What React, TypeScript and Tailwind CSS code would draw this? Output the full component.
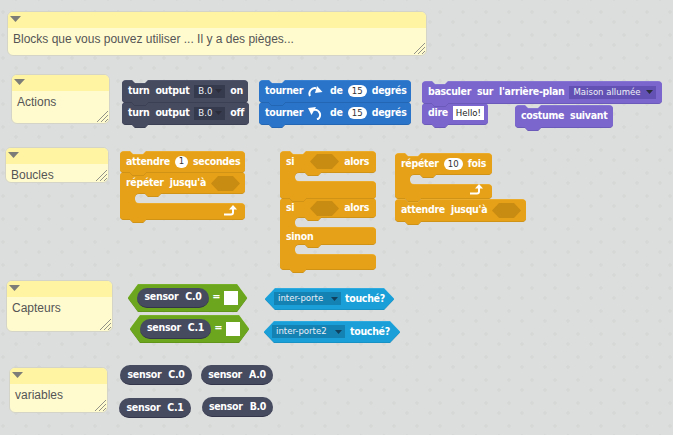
import type { ReactNode } from 'react'

const R = 4

// scratch stack block outline, mouths are [top, bottom] pairs for C blocks
function stackPath(w: number, h: number, mouths: [number, number][] = [], inner = 15) {
  let d = `M0 ${R} Q0 0 ${R} 0 L10 0 L13 3 L23 3 L26 0 L${w - R} 0 Q${w} 0 ${w} ${R} `
  for (const [a, b] of mouths) {
    d += `L${w} ${a - R} Q${w} ${a} ${w - R} ${a} L${inner + 26} ${a} L${inner + 23} ${a + 3} L${inner + 13} ${a + 3} L${inner + 10} ${a} L${inner + R} ${a} `
    d += `Q${inner} ${a} ${inner} ${a + R} L${inner} ${b - R} Q${inner} ${b} ${inner + R} ${b} L${w - R} ${b} Q${w} ${b} ${w} ${b + R} `
  }
  d += `L${w} ${h - R} Q${w} ${h} ${w - R} ${h} L26 ${h} L23 ${h + 3} L13 ${h + 3} L10 ${h} L${R} ${h} Q0 ${h} 0 ${h - R} Z`
  return d
}

function hexPath(w: number, h: number, p: number) {
  return `M0 ${h / 2} L${p} 0 L${w - p} 0 L${w} ${h / 2} L${w - p} ${h} L${p} ${h} Z`
}

type Tone = { main: string; light: string; dark: string }

const DARK = { main: '#474b60', light: '#5b5f76', dark: '#33364a' }
const BLUE = { main: '#2a74c9', light: '#4b8ed8', dark: '#1d5a9e' }
const PURPLE = { main: '#7a66cc', light: '#9484dc', dark: '#5f4eaa' }
const ORANGE = { main: '#e6a118', light: '#f0b63f', dark: '#bd8412' }
const GREEN = { main: '#6ca61f', light: '#83bc36', dark: '#558417' }
const CYAN = { main: '#1a9fd8', light: '#44b6e6', dark: '#1480ae' }

function Shape({ d, w, h, tone }: { d: string; w: number; h: number; tone: Tone }) {
  return (
    <svg width={w} height={h + 5} className="absolute left-0 top-0 overflow-visible">
      <path d={d} fill={tone.dark} transform="translate(0 1)" />
      <path d={d} fill={tone.light} />
      <path d={d} fill={tone.main} transform="translate(0 0.6)" />
    </svg>
  )
}

function Stack({ pos, w, h, tone, mouths, children }: { pos: string; w: number; h: number; tone: Tone; mouths?: [number, number][]; children: ReactNode }) {
  return (
    <div className={`absolute ${pos}`}>
      <Shape d={stackPath(w, h, mouths)} w={w} h={h} tone={tone} />
      <div className="relative flex flex-col">{children}</div>
    </div>
  )
}

function Row({ children, className = 'h-[22px]' }: { children?: ReactNode; className?: string }) {
  return (
    <div className={`flex items-center gap-[5px] whitespace-nowrap pl-[6px] text-[10.5px] font-bold tracking-[-0.3px] text-white [word-spacing:3px] ${className}`}>
      {children}
    </div>
  )
}

function Caret({ color = '#2b2d3a' }: { color?: string }) {
  return (
    <svg width="7" height="4" className="shrink-0">
      <path d="M0 0 L7 0 L3.5 4 Z" fill={color} />
    </svg>
  )
}

function Drop({ label, className, bg, caret }: { label: string; className: string; bg: string; caret?: string }) {
  return (
    <span className={`flex h-[13px] items-center justify-between pl-[4px] pr-[3px] text-[9.5px] font-normal tracking-normal text-[#eef0f6] [word-spacing:0] ${bg} ${className}`}>
      {label}
      <Caret color={caret} />
    </span>
  )
}

function Num({ value, className = 'w-[19px]' }: { value: string; className?: string }) {
  return (
    <span className={`flex h-[12px] items-center justify-center rounded-full bg-white text-[9.5px] font-normal tracking-normal text-[#333] ${className}`}>
      {value}
    </span>
  )
}

function Slot({ w, fill = '#c98c12' }: { w: number; fill?: string }) {
  return (
    <svg width={w} height="15" className="shrink-0">
      <path d={hexPath(w, 15, 7)} fill={fill} />
    </svg>
  )
}

function TurnRight() {
  return (
    <svg width="15" height="13" viewBox="0 0 15 13" className="shrink-0" fill="none">
      <path d="M2 11 A5.5 5.5 0 0 1 8 3.2" stroke="white" strokeWidth="2" />
      <path d="M9 1 L14.5 7 L7 8 Z" fill="white" />
    </svg>
  )
}

function TurnLeft() {
  return (
    <svg width="15" height="13" viewBox="0 0 15 13" className="shrink-0" fill="none">
      <path d="M6 3 A5 5 0 0 1 9 12.5" stroke="white" strokeWidth="2" />
      <path d="M0 1 L8 0 L3.5 8 Z" fill="white" />
    </svg>
  )
}

function LoopArrow() {
  return (
    <svg width="14" height="11" className="absolute bottom-[3px] right-[2px]" fill="none">
      <path d="M0 9.5 L7 9.5 Q9 9.5 9 7.5 L9 4" stroke="white" strokeWidth="2" />
      <path d="M5 4.5 L9 0 L13 4.5 Z" fill="white" />
    </svg>
  )
}

function Hex({ pos, w, h, tone, children }: { pos: string; w: number; h: number; tone: Tone; children: ReactNode }) {
  return (
    <div className={`absolute ${pos}`}>
      <Shape d={hexPath(w, h, 10)} w={w} h={h} tone={tone} />
      <div className="relative flex h-full items-center">{children}</div>
    </div>
  )
}

function Pill({ label, className = '' }: { label: string; className?: string }) {
  return (
    <span className={`flex h-[20px] items-center justify-center rounded-full border-b border-[#33364a] bg-[#474b60] text-[10.5px] font-bold tracking-[-0.3px] text-white [word-spacing:4px] ${className}`}>
      {label}
    </span>
  )
}

function Note({ pos, text }: { pos: string; text: string }) {
  return (
    <div className={`absolute flex flex-col overflow-hidden rounded-[6px] border border-[#d4d4c8] bg-[#fffbcf] ${pos}`}>
      <div className="h-[16px] shrink-0 bg-[#fff4a1] pl-[2px] pt-[4px]">
        <svg width="11" height="6" className="block">
          <path d="M0 0 L11 0 L5.5 6 Z" fill="#7c7c78" />
        </svg>
      </div>
      <p className="pl-[5px] pt-[4px] text-[12px] leading-[14px] text-[#555]">{text}</p>
      <svg width="11" height="11" className="absolute bottom-[1px] right-[1px]" stroke="#777" strokeWidth="0.8">
        <path d="M0 11 L11 0 M4 11 L11 4 M8 11 L11 8" />
      </svg>
    </div>
  )
}

export default function App() {
  return (
    <div className="relative h-[435px] w-[673px] overflow-hidden bg-[#dcdedd] font-['DejaVu_Sans_Condensed','DejaVu_Sans',sans-serif]">
      <svg width="673" height="435" className="absolute left-0 top-0">
        <defs>
          <pattern id="grid" width="23" height="23" x="0" y="10" patternUnits="userSpaceOnUse">
            <path d="M1 2 H5 M3 0 V4 M14 12 H18 M16 10 V14" stroke="#d3d5d4" strokeWidth="1" />
          </pattern>
        </defs>
        <rect width="673" height="435" fill="url(#grid)" />
      </svg>

      <div className="font-['Liberation_Sans',sans-serif]">
        <Note pos="left-[7px] top-[11px] h-[45px] w-[420px]" text="Blocks que vous pouvez utiliser ... Il y a des pièges..." />
        <Note pos="left-[11px] top-[74px] h-[50px] w-[99px]" text="Actions" />
        <Note pos="left-[5px] top-[147px] h-[36px] w-[104px]" text="Boucles" />
        <Note pos="left-[6px] top-[280px] h-[52px] w-[107px]" text="Capteurs" />
        <Note pos="left-[9px] top-[367px] h-[46px] w-[99px]" text="variables" />
      </div>

      <Stack pos="left-[122px] top-[102px]" w={127} h={22} tone={DARK}>
        <Row>turn output <Drop label="B.0" className="w-[31px]" bg="bg-[#363a4d]" /> off</Row>
      </Stack>
      <Stack pos="left-[122px] top-[80px]" w={126} h={22} tone={DARK}>
        <Row>turn output <Drop label="B.0" className="w-[31px]" bg="bg-[#363a4d]" /> on</Row>
      </Stack>

      <Stack pos="left-[259px] top-[102px]" w={152} h={22} tone={BLUE}>
        <Row>tourner <TurnLeft /> <span className="ml-[2px]">de</span> <Num value="15" /> degrés</Row>
      </Stack>
      <Stack pos="left-[259px] top-[80px]" w={152} h={22} tone={BLUE}>
        <Row>tourner <TurnRight /> <span className="ml-[2px]">de</span> <Num value="15" /> degrés</Row>
      </Stack>

      <Stack pos="left-[422px] top-[103px]" w={66} h={21} tone={PURPLE}>
        <Row className="h-[20px]">
          dire
          <span className="flex h-[14px] w-[31px] items-center justify-center bg-white text-[9.5px] font-normal tracking-normal text-[#222]">Hello!</span>
        </Row>
      </Stack>
      <Stack pos="left-[422px] top-[81px]" w={240} h={22} tone={PURPLE}>
        <Row>
          basculer sur l'arrière-plan
          <Drop label="Maison allumée" className="w-[87px]" bg="bg-[#6352b4]" />
        </Row>
      </Stack>
      <Stack pos="left-[515px] top-[105px]" w={98} h={22} tone={PURPLE}>
        <Row>costume suivant</Row>
      </Stack>

      <Stack pos="left-[120px] top-[172px]" w={125} h={47} tone={ORANGE} mouths={[[21, 31]]}>
        <div className="relative h-[47px]">
          <Row>répéter jusqu'à <Slot w={29} /></Row>
          <LoopArrow />
        </div>
      </Stack>
      <Stack pos="left-[120px] top-[151px]" w={125} h={21} tone={ORANGE}>
        <Row className="h-[21px]">attendre <Num value="1" className="w-[13px]" /> secondes</Row>
      </Stack>

      <Stack pos="left-[280px] top-[198px]" w={96} h={71} tone={ORANGE} mouths={[[19, 29], [46, 56]]}>
        <Row className="h-[20px]"><span>si</span><span className="ml-[11px]"><Slot w={29} /></span><span>alors</span></Row>
        <Row className="mt-[10px] h-[18px]">sinon</Row>
      </Stack>
      <Stack pos="left-[280px] top-[151px]" w={96} h={47} tone={ORANGE} mouths={[[21, 30]]}>
        <Row className="h-[21px]"><span>si</span><span className="ml-[11px]"><Slot w={29} /></span><span>alors</span></Row>
      </Stack>

      <Stack pos="left-[395px] top-[199px]" w={131} h={22} tone={ORANGE}>
        <Row>attendre jusqu'à <Slot w={29} /></Row>
      </Stack>
      <Stack pos="left-[395px] top-[153px]" w={97} h={45} tone={ORANGE} mouths={[[21, 31]]}>
        <div className="relative h-[45px]">
          <Row>répéter <Num value="10" className="w-[19px]" /> fois</Row>
          <LoopArrow />
        </div>
      </Stack>

      <Hex pos="left-[128px] top-[284px] h-[27px] w-[119px]" w={119} h={27} tone={GREEN}>
        <Pill label="sensor C.0" className="ml-[9px] w-[72px]" />
        <span className="w-[15px] text-center text-[11px] font-bold text-white">=</span>
        <span className="h-[14px] w-[14px] bg-white" />
      </Hex>
      <Hex pos="left-[130px] top-[315px] h-[27px] w-[119px]" w={119} h={27} tone={GREEN}>
        <Pill label="sensor C.1" className="ml-[10px] w-[71px]" />
        <span className="w-[15px] text-center text-[11px] font-bold text-white">=</span>
        <span className="h-[14px] w-[14px] bg-white" />
      </Hex>

      <Hex pos="left-[265px] top-[288px] h-[21px] w-[129px]" w={129} h={21} tone={CYAN}>
        <Drop label="inter-porte" className="ml-[9px] w-[67px]" bg="bg-[#1582b4]" caret="#10405c" />
        <span className="ml-[4px] text-[10.5px] font-bold tracking-[-0.3px] text-white">touché?</span>
      </Hex>
      <Hex pos="left-[264px] top-[321px] h-[21px] w-[136px]" w={136} h={21} tone={CYAN}>
        <Drop label="inter-porte2" className="ml-[8px] w-[73px]" bg="bg-[#1582b4]" caret="#10405c" />
        <span className="ml-[5px] text-[10.5px] font-bold tracking-[-0.3px] text-white">touché?</span>
      </Hex>

      <div className="absolute left-[120px] top-[365px]"><Pill label="sensor C.0" className="w-[72px]" /></div>
      <div className="absolute left-[201px] top-[365px]"><Pill label="sensor A.0" className="w-[72px]" /></div>
      <div className="absolute left-[119px] top-[398px]"><Pill label="sensor C.1" className="w-[72px]" /></div>
      <div className="absolute left-[202px] top-[397px]"><Pill label="sensor B.0" className="w-[71px]" /></div>
    </div>
  )
}
